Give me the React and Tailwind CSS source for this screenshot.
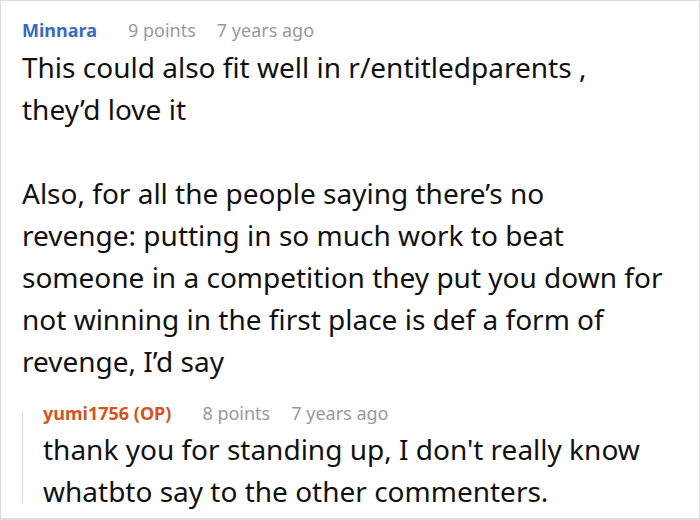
import React from 'react';

const font = { fontFamily: '"Noto Sans", "Open Sans", sans-serif' };

const Meta = ({ name, nameClass, points, time }) => (
  <div className="flex items-baseline text-[18px] leading-[24px]">
    <span className={`font-bold ${nameClass}`}>{name}</span>
    <span className="ml-[31px] text-[#999999]">{points}</span>
    <span className="ml-[21px] text-[#999999]">{time}</span>
  </div>
);

export default function App() {
  return (
    <div className="w-[700px] h-[520px] bg-white" style={font}>
      <div className="h-full border border-b-2 border-[#dddddd] pl-[21px] pt-[17px]">
        <Meta name="Minnara" nameClass="text-[#3a6bbd]" points="9 points" time="7 years ago" />
        <div className="mt-[4px] text-[28px] leading-[42px] text-[#111111]">
          <p>This could also fit well in r/entitledparents ,</p>
          <p>they’d love it</p>
          <p>&nbsp;</p>
          <p>Also, for all the people saying there’s no</p>
          <p>revenge: putting in so much work to beat</p>
          <p>someone in a competition they put you down for</p>
          <p>not winning in the first place is def a form of</p>
          <p>revenge, I’d say</p>
        </div>

        {/* reply */}
        <div className="mt-[19px] flex">
          <div className="w-px bg-[#dddddd] mt-[10px] mb-[9px]" />
          <div className="pl-[20px]">
            <Meta name="yumi1756 (OP)" nameClass="text-[#d4531e]" points="8 points" time="7 years ago" />
            <div className="mt-[3px] text-[28px] leading-[42px] text-[#111111]">
              <p>thank you for standing up, I don't really know</p>
              <p>whatbto say to the other commenters.</p>
            </div>
          </div>
        </div>
      </div>
    </div>
  );
}
